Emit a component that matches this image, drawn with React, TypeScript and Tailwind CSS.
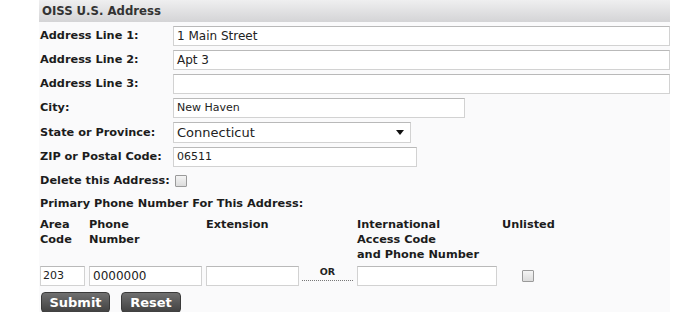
import React from "react"

function Field({ label, value, width, small }: { label: string; value?: string; width: string; small?: boolean }) {
  return (
    <div className="flex items-center h-[20px] mb-[4px]">
      <div className="w-[133px] text-[11.3px] font-bold text-[#1c1c1c] leading-none">{label}</div>
      <div
        className={
          "h-[20px] border border-[#d2d2d2] border-t-[#b9b9b9] bg-white flex items-center px-[3px] text-[#222] " +
          width +
          (small ? " text-[11px]" : " text-[12px]")
        }
      >
        {value}
      </div>
    </div>
  )
}

function Box({ className }: { className?: string }) {
  return (
    <span
      className={
        "inline-block w-[12px] h-[12px] border border-[#9a9a9a] bg-gradient-to-b from-[#f4f4f4] to-[#dcdcdc] rounded-[1px] " +
        (className ?? "")
      }
    />
  )
}

export default function App() {
  return (
    <div className="min-h-screen bg-white font-['DejaVu_Sans',Verdana,sans-serif]">
      <div className="ml-[39px] w-[631px] bg-[#fafafb] h-[312px]">
        <div className="h-[22px] bg-gradient-to-b from-[#efeff0] to-[#d4d4d6] flex items-center pl-[3px] text-[13px] font-bold text-[#333] font-['DejaVu_Sans_Condensed',sans-serif]">
          OISS U.S. Address
        </div>
        <div className="pl-[1px] pt-[4px]">
          <Field label="Address Line 1:" value="1 Main Street" width="w-[497px]" />
          <Field label="Address Line 2:" value="Apt 3" width="w-[497px]" />
          <Field label="Address Line 3:" width="w-[497px]" />
          <Field label="City:" value="New Haven" width="w-[292px]" small />
          <div className="flex items-center h-[21px] mb-[4px]">
            <div className="w-[133px] text-[11.3px] font-bold text-[#1c1c1c] leading-none">State or Province:</div>
            <div className="w-[238px] h-[21px] border border-[#d2d2d2] border-t-[#b9b9b9] bg-white flex items-center justify-between pl-[3px] pr-[6px] text-[13px] text-[#222]">
              <span>Connecticut</span>
              <svg width="8" height="5" viewBox="0 0 8 5">
                <path d="M0 0 L8 0 L4 5 Z" fill="#111" />
              </svg>
            </div>
          </div>
          <Field label="ZIP or Postal Code:" value="06511" width="w-[244px]" small />
          <div className="flex items-center h-[20px] mt-[3px]">
            <div className="text-[11.3px] font-bold text-[#1c1c1c] leading-none">Delete this Address:</div>
            <Box className="ml-[5px]" />
          </div>
          <div className="mt-[7px] text-[11.3px] font-bold text-[#1c1c1c] leading-none">Primary Phone Number For This Address:</div>
          <div className="flex mt-[8px] text-[11.3px] font-bold text-[#1c1c1c] leading-[15px] h-[49px]">
            <div className="w-[49px]">Area<br />Code</div>
            <div className="w-[117px]">Phone<br />Number</div>
            <div className="w-[151px]">Extension</div>
            <div className="w-[145px]">International<br />Access Code<br />and Phone Number</div>
            <div>Unlisted</div>
          </div>
          <div className="flex items-center h-[20px]">
            <div className="w-[45px] h-[20px] border border-[#d2d2d2] border-t-[#b9b9b9] bg-white flex items-center px-[2px] text-[11px] text-[#222]">203</div>
            <div className="ml-[4px] w-[113px] h-[20px] border border-[#d2d2d2] border-t-[#b9b9b9] bg-white flex items-center px-[3px] text-[12px] text-[#222]">0000000</div>
            <div className="ml-[4px] w-[93px] h-[20px] border border-[#d2d2d2] border-t-[#b9b9b9] bg-white" />
            <div className="ml-[3px] w-[51px] h-[15px] border-b border-dotted border-[#777] text-center text-[9.5px] font-bold leading-[11px] text-[#222] self-start">OR</div>
            <div className="ml-[4px] w-[140px] h-[20px] border border-[#d2d2d2] border-t-[#b9b9b9] bg-white" />
            <Box className="ml-[25px]" />
          </div>
          <div className="flex gap-[11px] mt-[6px] pl-[1px]">
            <button className="w-[69px] h-[21px] rounded-[4px] border border-[#3a3a3a] bg-gradient-to-b from-[#707070] to-[#414141] text-white text-[13px] font-bold leading-none">Submit</button>
            <button className="w-[60px] h-[21px] rounded-[4px] border border-[#3a3a3a] bg-gradient-to-b from-[#707070] to-[#414141] text-white text-[13px] font-bold leading-none">Reset</button>
          </div>
        </div>
      </div>
    </div>
  )
}
